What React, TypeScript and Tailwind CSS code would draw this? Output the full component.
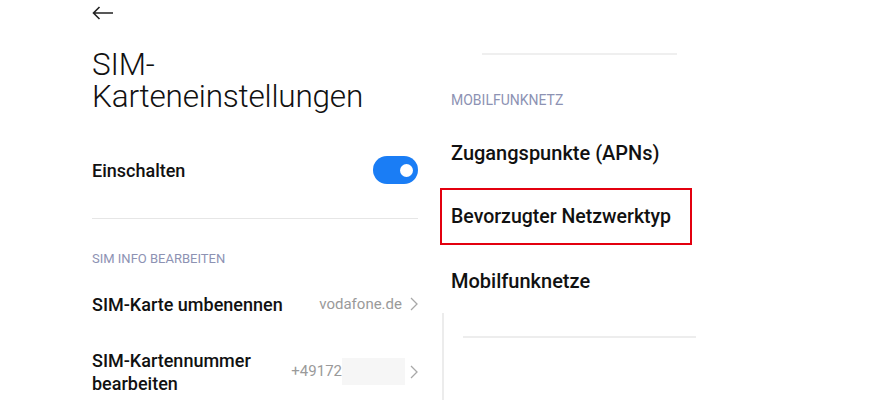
import React from 'react';

function Chevron() {
  return (
    <svg width="8" height="14" viewBox="0 0 8 14" fill="none" className="shrink-0">
      <path d="M1 1l6 6-6 6" stroke="#a8a8a8" strokeWidth="1.3" />
    </svg>
  );
}

function Toggle() {
  return (
    <div className="w-[45px] h-[28px] rounded-full bg-[#1a7df5] flex items-center justify-end pr-[5px]">
      <div className="w-[13px] h-[13px] rounded-full bg-white" />
    </div>
  );
}

export default function App() {
  return (
    <div className="w-[879px] h-[400px] bg-white overflow-hidden flex font-['Roboto',sans-serif] text-[#111]">
      {/* linke Seite */}
      <div className="ml-[92px] w-[326px] flex flex-col shrink-0">
        <div className="h-[28px] flex items-center">
          <svg width="22" height="14" viewBox="0 0 22 14" fill="none">
            <path d="M21 7H1.5M7.5 1L1.5 7l6 6" stroke="#222" strokeWidth="1.6" />
          </svg>
        </div>
        <h1 className="mt-[22px] text-[31.5px] leading-[32px] font-light tracking-[-0.2px]">
          <div>SIM-</div>
          <div>Karteneinstellungen</div>
        </h1>
        <div className="mt-[31px] h-[56px] flex items-center justify-between">
          <span className="text-[18px] font-medium">Einschalten</span>
          <Toggle />
        </div>
        <div className="mt-[21px] h-[1px] bg-[#e6e6e6]" />
        <div className="mt-[30px] h-[20px] flex items-center text-[13px] text-[#8d92b3]">
          SIM INFO BEARBEITEN
        </div>
        <div className="mt-[17px] h-[40px] flex items-center justify-between">
          <span className="text-[18px] font-medium">SIM-Karte umbenennen</span>
          <div className="flex items-center gap-[8px]">
            <span className="text-[15px] text-[#9a9a9a]">vodafone.de</span>
            <Chevron />
          </div>
        </div>
        <div className="mt-[20px] h-[60px] flex items-center justify-between">
          <span className="text-[18px] font-medium leading-[23px]">
            SIM-Kartennummer
            <br />
            bearbeiten
          </span>
          <div className="flex items-center">
            <span className="text-[15px] text-[#9a9a9a]">+49172</span>
            <div className="w-[63px] h-[27px] bg-[#f6f6f6]" />
            <div className="ml-[5px]">
              <Chevron />
            </div>
          </div>
        </div>
      </div>

      {/* rechte Seite */}
      <div className="ml-[22px] w-[256px] flex flex-col shrink-0">
        <div className="mt-[53px] ml-[42px] w-[195px] h-[2px] bg-[#efefef]" />
        <div className="mt-[35px] h-[20px] pl-[11px] flex items-center text-[14px] text-[#8d92b3]">
          MOBILFUNKNETZ
        </div>
        <div className="mt-[23px] h-[40px] pl-[11px] flex items-center text-[20px] font-medium">
          Zugangspunkte (APNs)
        </div>
        <div className="mt-[15px] w-[252px] h-[57px] border-2 border-[#e3000f] pl-[9px] flex items-center text-[19.5px] font-medium">
          Bevorzugter Netzwerktyp
        </div>
        <div className="mt-[16px] h-[40px] pl-[11px] flex items-center text-[20px] font-medium">
          Mobilfunknetze
        </div>
        <div className="mt-[12px] ml-[2px] h-[87px] border-l-2 border-[#ececec]">
          <div className="mt-[23px] ml-[19px] w-[233px] h-[2px] bg-[#ededed]" />
        </div>
      </div>
    </div>
  );
}
